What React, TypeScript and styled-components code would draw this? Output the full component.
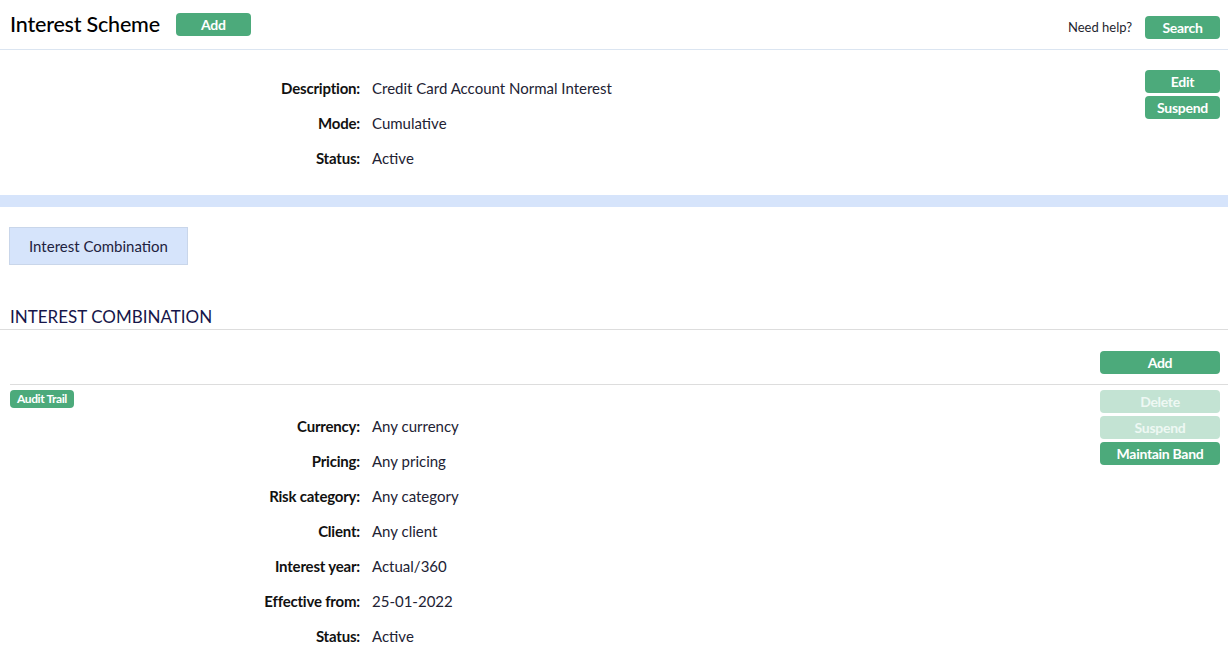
import React from "react";
import styled, { createGlobalStyle } from "styled-components";

const GlobalStyle = createGlobalStyle`
  html, body { margin: 0; padding: 0; background: #fff; }
  body { font-family: Lato, "Noto Sans", sans-serif; color: #1f1f2f; }
  * { box-sizing: border-box; }
`;

const Page = styled.div`
  width: 1228px;
  display: flex;
  flex-direction: column;
`;

const Header = styled.header`
  height: 50px;
  display: flex;
  align-items: center;
  padding: 0 8px 0 10px;
  border-bottom: 1px solid #dbe5f1;
`;

const Title = styled.h1`
  margin: 0 16px 2px 0;
  font-size: 21.5px;
  font-weight: 500;
  color: #000;
  letter-spacing: -0.2px;
`;

const Spacer = styled.div`
  flex: 1;
`;

const Help = styled.span`
  font-size: 13px;
  color: #1f1f2f;
  margin-right: 13px;
  margin-top: 5px;
`;

const Btn = styled.button<{ $w: number; $disabled?: boolean }>`
  width: ${(p) => p.$w}px;
  height: 23px;
  border: none;
  border-radius: 4px;
  background: ${(p) => (p.$disabled ? "#c3e3d3" : "#4caa7b")};
  color: ${(p) => (p.$disabled ? "#eef8f3" : "#fff")};
  font-family: Lato, "Noto Sans", sans-serif;
  font-weight: 700;
  font-size: 14px;
  letter-spacing: -0.3px;
  padding: 0;
  cursor: pointer;
`;

const Details = styled.section`
  display: flex;
  padding: 20px 8px 26px 10px;
  border-bottom: 12px solid #d6e4fb;
`;

const Grid = styled.dl<{ $top?: number }>`
  flex: 1;
  margin: ${(p) => p.$top ?? 0}px 0 0;
  display: grid;
  grid-template-columns: 350px 1fr;
  column-gap: 12px;
  row-gap: 14px;
  align-content: start;
`;

const Label = styled.dt`
  text-align: right;
  font-size: 15px;
  font-weight: 700;
  color: #111;
  line-height: 21px;
  letter-spacing: -0.2px;
`;

const Value = styled.dd`
  margin: 0;
  font-size: 15px;
  color: #222233;
  line-height: 21px;
`;

const ButtonStack = styled.div`
  display: flex;
  flex-direction: column;
  gap: 3px;
  align-items: flex-end;
`;

const Tabs = styled.nav`
  padding: 20px 0 0 9px;
  display: flex;
`;

const Tab = styled.div`
  width: 179px;
  height: 38px;
  background: #d6e4fb;
  border: 1px solid #c9d6ea;
  display: flex;
  align-items: center;
  justify-content: center;
  font-size: 15px;
  color: #1e2240;
`;

const SectionTitle = styled.h2`
  margin: 41px 0 0;
  padding: 0 10px 1px;
  font-size: 17px;
  font-weight: 400;
  color: #16164a;
  border-bottom: 1px solid #ddd;
  line-height: 22px;
`;

const AddRow = styled.div`
  display: flex;
  justify-content: flex-end;
  padding: 21px 8px 10px 10px;
  margin-left: 10px;
  border-bottom: 1px solid #ddd;
`;

const Record = styled.section`
  display: flex;
  padding: 5px 8px 0 10px;
`;

const RecordBody = styled.div`
  flex: 1;
  display: flex;
  flex-direction: column;
`;

const Badge = styled.span`
  align-self: flex-start;
  background: #4caa7b;
  color: #fff;
  font-size: 12px;
  font-weight: 700;
  letter-spacing: -0.4px;
  border-radius: 4px;
  padding: 0 7px;
  height: 18px;
  line-height: 18px;
  margin-bottom: 8px;
`;

const header = [
  ["Description:", "Credit Card Account Normal Interest"],
  ["Mode:", "Cumulative"],
  ["Status:", "Active"],
];

const combo = [
  ["Currency:", "Any currency"],
  ["Pricing:", "Any pricing"],
  ["Risk category:", "Any category"],
  ["Client:", "Any client"],
  ["Interest year:", "Actual/360"],
  ["Effective from:", "25-01-2022"],
  ["Status:", "Active"],
];

export default function App() {
  return (
    <Page>
      <GlobalStyle />
      <Header>
        <Title>Interest Scheme</Title>
        <Btn $w={75}>Add</Btn>
        <Spacer />
        <Help>Need help?</Help>
        <Btn $w={75} style={{ marginTop: 5 }}>Search</Btn>
      </Header>
      <Details>
        <Grid $top={8}>
          {header.map(([l, v]) => (
            <React.Fragment key={l}>
              <Label>{l}</Label>
              <Value>{v}</Value>
            </React.Fragment>
          ))}
        </Grid>
        <ButtonStack>
          <Btn $w={75}>Edit</Btn>
          <Btn $w={75}>Suspend</Btn>
        </ButtonStack>
      </Details>
      <Tabs>
        <Tab>Interest Combination</Tab>
      </Tabs>
      <SectionTitle>INTEREST COMBINATION</SectionTitle>
      <AddRow>
        <Btn $w={120}>Add</Btn>
      </AddRow>
      <Record>
        <RecordBody>
          <Badge>Audit Trail</Badge>
          <Grid>
            {combo.map(([l, v]) => (
              <React.Fragment key={l}>
                <Label>{l}</Label>
                <Value>{v}</Value>
              </React.Fragment>
            ))}
          </Grid>
        </RecordBody>
        <ButtonStack>
          <Btn $w={120} $disabled>Delete</Btn>
          <Btn $w={120} $disabled>Suspend</Btn>
          <Btn $w={120}>Maintain Band</Btn>
        </ButtonStack>
      </Record>
    </Page>
  );
}
